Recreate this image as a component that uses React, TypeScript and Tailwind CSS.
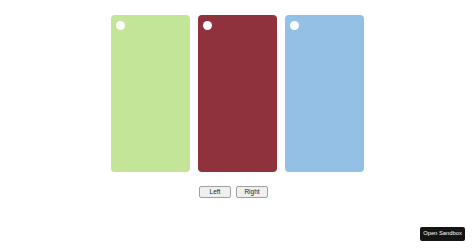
import React from "react";

export default function App() {
  const cards = ["bg-[#c2e597]", "bg-[#8f323d]", "bg-[#94c0e6]"];
  return (
    <div className="relative w-[474px] h-[248px] bg-white overflow-hidden" style={{ fontFamily: '"Liberation Sans", Arial, sans-serif' }}>
      <div className="flex flex-col items-center pt-[15px]">
        <div className="flex gap-[8px]">
          {cards.map((c, i) => (
            <div key={i} className={`w-[79px] h-[157px] rounded-[4px] ${c} pt-[6px] pl-[5px]`}>
              <div className="w-[9px] h-[9px] rounded-full bg-white" />
            </div>
          ))}
        </div>
        <div className="flex gap-[5px] mt-[14px] mr-[7px]">
          <button className="w-[32px] h-[12px] text-[6.5px] leading-none text-[#222] bg-[#efefef] border border-[#a0a0a0] rounded-[2px]">Left</button>
          <button className="w-[32px] h-[12px] text-[6.5px] leading-none text-[#222] bg-[#efefef] border border-[#a0a0a0] rounded-[2px]">Right</button>
        </div>
      </div>
      <div className="absolute right-[9px] bottom-[7px] w-[45px] h-[14px] bg-[#141414] rounded-[2px] flex items-center justify-center text-white text-[5.8px] leading-none">Open Sandbox</div>
    </div>
  );
}
